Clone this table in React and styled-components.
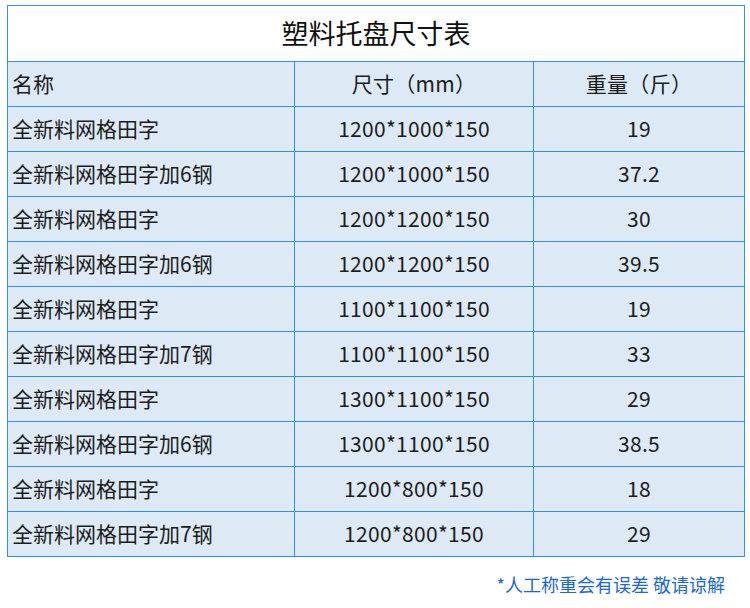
import React from 'react'
import styled, { createGlobalStyle } from 'styled-components'

const GlobalStyle = createGlobalStyle`
    body {
        margin: 0;
        background: #ffffff;
        font-family: "Noto Sans CJK SC", "Noto Sans", sans-serif;
        color: #1a1a1a;
    }
`

const Page = styled.div`
    width: 750px;
    height: 608px;
    padding: 5px 6px 0 7px;
    box-sizing: border-box;
`

const Table = styled.table`
    width: 737px;
    border-collapse: collapse;
    table-layout: fixed;

    & td, & th {
        border: 1px solid #3191ee;
        padding: 0 0 3px 0;
        font-weight: 400;
        box-sizing: border-box;
    }
`

const TitleCell = styled.th`
    height: 56px;
    background: #ffffff;
    font-size: 27px;
    text-align: center;
    color: #111;
`

const Row = styled.tr`
    background: #dde9f5;
    height: 45px;
`

const Cell = styled.td`
    font-size: 21px;
    text-align: ${p => (p.$left ? 'left' : 'center')};
    padding-left: ${p => (p.$left ? '4px' : '0')} !important;
    color: #1c1c1c;
    white-space: nowrap;
    letter-spacing: ${p => (p.$left ? '0' : '0.3px')};
`

const Note = styled.div`
    text-align: right;
    padding: 14px 19px 0 0;
    font-size: 18px;
    color: #1a68d6;
`

const rows = [
    ['全新料网格田字', '1200*1000*150', '19'],
    ['全新料网格田字加6钢', '1200*1000*150', '37.2'],
    ['全新料网格田字', '1200*1200*150', '30'],
    ['全新料网格田字加6钢', '1200*1200*150', '39.5'],
    ['全新料网格田字', '1100*1100*150', '19'],
    ['全新料网格田字加7钢', '1100*1100*150', '33'],
    ['全新料网格田字', '1300*1100*150', '29'],
    ['全新料网格田字加6钢', '1300*1100*150', '38.5'],
    ['全新料网格田字', '1200*800*150', '18'],
    ['全新料网格田字加7钢', '1200*800*150', '29'],
]

const App = () => {
    return (
        <Page>
            <GlobalStyle />
            <Table>
                <colgroup>
                    <col style={{ width: 287 }} />
                    <col style={{ width: 239 }} />
                    <col style={{ width: 211 }} />
                </colgroup>
                <thead>
                    <tr>
                        <TitleCell colSpan={3}>塑料托盘尺寸表</TitleCell>
                    </tr>
                </thead>
                <tbody>
                    <Row>
                        <Cell $left>名称</Cell>
                        <Cell>尺寸（mm）</Cell>
                        <Cell>重量（斤）</Cell>
                    </Row>
                    {rows.map((r, i) => (
                        <Row key={i}>
                            <Cell $left>{r[0]}</Cell>
                            <Cell>{r[1]}</Cell>
                            <Cell>{r[2]}</Cell>
                        </Row>
                    ))}
                </tbody>
            </Table>
            <Note>*人工称重会有误差 敬请谅解</Note>
        </Page>
    )
}

export default App
